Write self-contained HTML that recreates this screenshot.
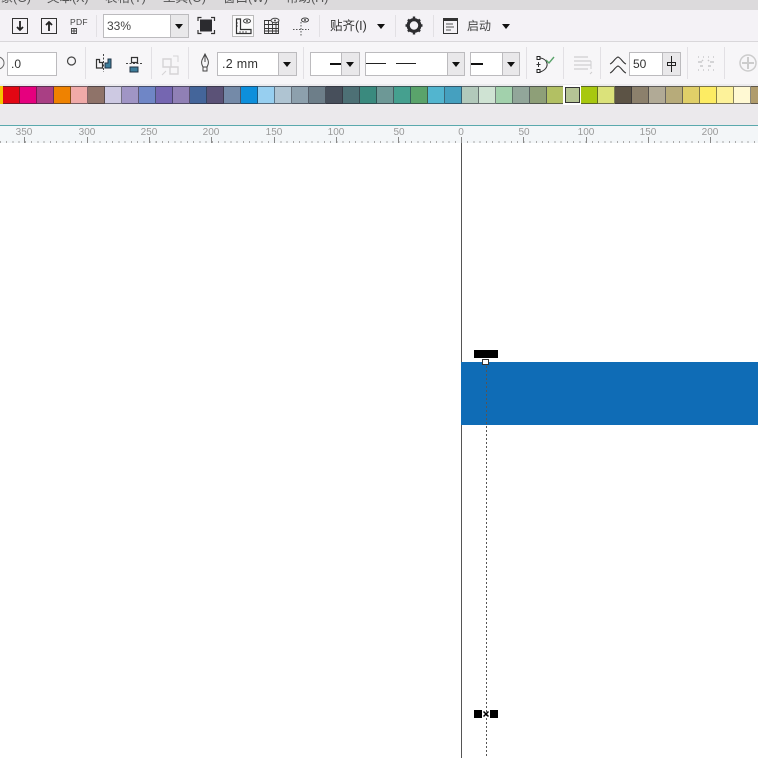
<!DOCTYPE html>
<html><head><meta charset="utf-8">
<style>
html,body{margin:0;padding:0;background:#fff}
#p{position:relative;width:758px;height:758px;overflow:hidden;background:#fff;font-family:"Liberation Sans","Noto Sans CJK SC",sans-serif;color:#333}
#p div,#p span,#p svg{position:absolute;display:block}
.m{font-size:12.500px;line-height:18px;top:-11px;color:#555;white-space:nowrap}
.sep{width:1px;background:#e2e0e4}
.box{background:#fff;border:1px solid #bcbbbe;box-sizing:border-box;font-size:12px;color:#333}
.dd{background:#e9e8ea;border:1px solid #bcbbbe;box-sizing:border-box}
.dd:after,.ar{content:"";position:absolute;width:0;height:0;border-left:4.500px solid transparent;border-right:4.500px solid transparent;border-top:5px solid #111}
.dd:after{left:50%;top:50%;margin-left:-4.500px;margin-top:-2px}
.s{top:86px;height:18px;width:17px;box-sizing:border-box;border-right:1px solid rgba(40,40,50,.55);border-top:1px solid rgba(40,40,50,.6);border-bottom:1px solid rgba(40,40,50,.6)}
.l{top:127px;font-size:10px;line-height:11px;color:#999;width:30px;text-align:center;font-family:"Liberation Sans",sans-serif}
.t{top:137px;width:1px;height:6px;background:#888}
</style></head><body><div id="p">
<!-- menu -->
<div style="left:0;top:0;width:758px;height:10px;background:#dcdadc;overflow:hidden">
<span class="m" style="left:-12px">对象(G)</span><span class="m" style="left:47px">文本(X)</span><span class="m" style="left:105px">表格(T)</span><span class="m" style="left:163px">工具(O)</span><span class="m" style="left:223px">窗口(W)</span><span class="m" style="left:286px">帮助(H)</span>
</div>
<!-- toolbar 1 -->
<div style="left:0;top:10px;width:758px;height:31px;background:#f4f2f6"></div>
<div style="left:0;top:41px;width:758px;height:1px;background:#d9d7da"></div>
<!-- toolbar 2 -->
<div style="left:0;top:42px;width:758px;height:42px;background:#f7f6f8"></div>
<div style="left:0;top:84px;width:758px;height:2px;background:#ecebee"></div>
<div style="left:0;top:104px;width:758px;height:21px;background:#ebe9ec"></div>
<div style="left:0;top:125px;width:758px;height:1px;background:#5aa9ad"></div>
<!-- ruler -->
<div style="left:0;top:126px;width:758px;height:17px;background:#f3f6f8"></div>
<div style="left:0;top:141px;width:758px;height:2px;background:repeating-linear-gradient(90deg,#aaa 0 1px,transparent 1px 6.230px)"></div>

<!-- toolbar 1 icons -->
<svg style="left:0;top:10px" width="330" height="32" viewBox="0 0 330 32" fill="none">
<path d="M12.500 8.500h15v15h-15z" stroke="#333"/><path d="M20 11v9M17 17l3 3 3-3" stroke="#222" stroke-width="1.800"/>
<path d="M41.500 8.500h15v15h-15z" stroke="#333"/><path d="M49 21v-9M46 15l3-3 3 3" stroke="#222" stroke-width="1.800"/>
<path d="M71.500 18.500h5v5h-5zM74 18v6M71 21h6" stroke="#444" stroke-width=".9"/>
<path d="M198 11v-3.500h3.500M211 7.500h3.500V11M214.500 20v3.500H211M201.500 23.500H198V20" stroke="#333" stroke-width="1.200"/>
<rect x="200" y="9.500" width="12" height="12" fill="#2b2b2f"/>
<path d="M232.500 5.500h21v21h-21z" fill="#fcfbfc" stroke="#bbb"/>
<path d="M236.500 9v14.500h14.500v-4h-10.500V9z" stroke="#333" stroke-width="1.200"/><path d="M240 23v-2M243 23v-2M246 23v-2M236 13h2M236 16h2" stroke="#333" stroke-width=".8"/>
<ellipse cx="247" cy="11" rx="3.500" ry="2" stroke="#444"/><circle cx="247" cy="11" r="1" fill="#444"/>
<path d="M264.500 10.500h14v13h-14zM264.500 14.500h14M264.500 18.500h14M264.500 21h14M268.500 10v14M272.500 10v14M276 10v14" stroke="#333" stroke-width=".9"/>
<ellipse cx="275" cy="10.500" rx="4" ry="2.200" fill="#f4f2f6" stroke="#444"/><circle cx="275" cy="10.500" r="1" fill="#444"/>
<path d="M293 19.500h16M301 12v15" stroke="#555" stroke-dasharray="1.500 1.500"/>
<ellipse cx="305" cy="10" rx="3.500" ry="2" stroke="#444"/><circle cx="305" cy="10" r="1" fill="#444"/>
</svg>
<span style="left:70px;top:18px;font-size:8.500px;line-height:9px;color:#444;letter-spacing:.3px">PDF</span>
<div class="sep" style="left:96px;top:15px;height:22px"></div>
<div class="box" style="left:103px;top:14px;width:68px;height:24px;line-height:22px;padding-left:3px;font-size:12px;color:#444">33%</div>
<div class="dd" style="left:170px;top:14px;width:19px;height:24px"></div>
<div class="sep" style="left:319px;top:15px;height:22px"></div>
<span style="left:330px;top:17px;font-size:12.500px;line-height:18px;color:#333;white-space:nowrap">贴齐(I)</span>
<span class="ar" style="left:377px;top:24px"></span>
<div class="sep" style="left:395px;top:15px;height:22px"></div>
<svg style="left:404px;top:15px" width="20" height="21" viewBox="0 0 20 21" fill="none"><circle cx="10" cy="10.500" r="5.800" stroke="#2d2d30" stroke-width="3.200"/><path d="M10 1.500v3M10 16.500v3M1.500 10.500h3M15.500 10.500h3M4 4.500l2 2M14 14.500l2 2M16 4.500l-2 2M6 14.500l-2 2" stroke="#2d2d30" stroke-width="2.400"/></svg>
<div class="sep" style="left:433px;top:15px;height:22px"></div>
<svg style="left:442px;top:16px" width="18" height="19" viewBox="0 0 18 19" fill="none"><path d="M1.500 2.500h14v15h-14z" stroke="#333"/><path d="M1 3h15v2H1z" fill="#333"/><path d="M4 8h7M4 11h8M4 14h5" stroke="#555"/></svg>
<span style="left:467px;top:17px;font-size:12px;line-height:18px;color:#444">启动</span>
<span class="ar" style="left:502px;top:24px"></span>

<!-- toolbar 2 -->
<svg style="left:0;top:42px" width="758" height="42" viewBox="0 0 758 42" fill="none">
<circle cx="-2" cy="21" r="6" stroke="#666"/>
<circle cx="71.500" cy="19" r="4" stroke="#444" stroke-width="1.200"/>
<path d="M96.500 17.500h3v3h3v5.500h-6z" stroke="#333" stroke-width="1.200"/>
<path d="M105 26v-5h3v-4h3v9z" fill="#3d7d9b" stroke="#234"/>
<path d="M103.500 12v18" stroke="#444" stroke-dasharray="2 1.500"/>
<path d="M131.500 15.500h6v5h-6z" stroke="#333" stroke-width="1.200"/>
<rect x="130" y="25" width="8" height="5" fill="#3d7d9b" stroke="#234"/>
<path d="M126 21.500h16" stroke="#444" stroke-dasharray="2 1.500"/>
<path d="M163 17h8v8h-8zM170 25h8v7h-8z" stroke="#d5d4d6" stroke-width="1.400"/><path d="M173 14h5v6M162 33l4-4" stroke="#d5d4d6"/>
<path d="M205 12l3 6c1 3 0 5-1 7h-4c-1-2-2-4-1-7zM205 12v8M203 25h4v4h-4z" stroke="#444"/>
<path d="M537 14.500h3v3h-3zM537 27.500h3v3h-3z" stroke="#222" fill="#fff"/><path d="M540 16c9 1 10 11 0 14M538.500 20v5M536.500 22.500h4" stroke="#333"/>
<path d="M546 18l3 3 5-6" stroke="#5aa36b" stroke-width="1.400"/>
<path d="M574 15h14M574 19h17M574 23h17M574 27h14" stroke="#cfced0" stroke-width="1.200"/><path d="M591 19v8M590 32l2-2" stroke="#cfced0"/>
<path d="M610 22c3-1 5-6 8-7 3 1 5 6 8 7M610 31c3-1 5-6 8-7 3 1 5 6 8 7" stroke="#333" stroke-width="1.100"/>
<path d="M698 15h1M703 15h1M708 15h1M713 15h1M698 20h4M710 20h4M700 24h3M708 24h3M698 28h1M703 28h1M708 28h1M713 28h1M702 18l1 1M709 18l-1 1" stroke="#c9c8ca" stroke-width="1.500"/>
<circle cx="748" cy="21" r="8" stroke="#ccc" stroke-width="1.500"/><path d="M748 15v12M742 21h12" stroke="#ccc" stroke-width="2"/>
</svg>
<div class="box" style="left:7px;top:52px;width:50px;height:24px;line-height:22px;padding-left:3px">.0</div>
<div class="sep" style="left:85px;top:47px;height:32px"></div>
<div class="sep" style="left:151px;top:47px;height:32px"></div>
<div class="sep" style="left:188px;top:47px;height:32px"></div>
<div class="box" style="left:217px;top:52px;width:62px;height:24px;line-height:22px;padding-left:4px;font-size:12.500px;letter-spacing:.3px">.2 mm</div>
<div class="dd" style="left:278px;top:52px;width:19px;height:24px"></div>
<div class="sep" style="left:303px;top:47px;height:32px"></div>
<div class="box" style="left:310px;top:52px;width:32px;height:24px"></div>
<div style="left:330px;top:63px;width:12px;height:2px;background:#111"></div>
<div class="dd" style="left:341px;top:52px;width:19px;height:24px"></div>
<div class="box" style="left:365px;top:52px;width:83px;height:24px"></div>
<div style="left:366px;top:63px;width:20px;height:1px;background:#222"></div>
<div style="left:396px;top:63px;width:20px;height:1px;background:#222"></div>
<div class="dd" style="left:447px;top:52px;width:18px;height:24px"></div>
<div class="box" style="left:470px;top:52px;width:33px;height:24px"></div>
<div style="left:471px;top:63px;width:12px;height:2px;background:#111"></div>
<div class="dd" style="left:502px;top:52px;width:18px;height:24px"></div>
<div class="sep" style="left:526px;top:47px;height:32px"></div>
<div class="sep" style="left:563px;top:47px;height:32px"></div>
<div class="sep" style="left:600px;top:47px;height:32px"></div>
<div class="box" style="left:629px;top:52px;width:34px;height:24px;line-height:22px;padding-left:3px;font-size:12px">50</div>
<div style="left:662px;top:52px;width:19px;height:24px;background:#e9e8ea;border:1px solid #bcbbbe;box-sizing:border-box"></div>
<svg style="left:663px;top:53px" width="17" height="22" viewBox="0 0 17 22" fill="none"><path d="M4.500 9.500h8v3h-8zM8.500 3v16" stroke="#222"/></svg>
<div class="sep" style="left:687px;top:47px;height:32px"></div>
<div class="sep" style="left:724px;top:47px;height:32px"></div>

<!-- palette -->
<div style="left:0;top:86px;width:3px;height:18px;background:#f5c400"></div>
<div class="s" style="left:2.700px;background:#e30613"></div>
<div class="s" style="left:19.700px;background:#e6007e"></div>
<div class="s" style="left:36.700px;background:#a93f84"></div>
<div class="s" style="left:53.700px;background:#ef8200"></div>
<div class="s" style="left:70.700px;background:#f0aaa8"></div>
<div class="s" style="left:87.700px;background:#8f7369"></div>
<div class="s" style="left:104.700px;background:#cdc9e2"></div>
<div class="s" style="left:121.700px;background:#a095c5"></div>
<div class="s" style="left:138.700px;background:#6f86c6"></div>
<div class="s" style="left:155.700px;background:#7566b1"></div>
<div class="s" style="left:172.700px;background:#9080b5"></div>
<div class="s" style="left:189.700px;background:#44659a"></div>
<div class="s" style="left:206.700px;background:#5b5277"></div>
<div class="s" style="left:223.700px;background:#748aa8"></div>
<div class="s" style="left:240.700px;background:#0d8fdc"></div>
<div class="s" style="left:257.700px;background:#97cff0"></div>
<div class="s" style="left:274.700px;background:#afc4d2"></div>
<div class="s" style="left:291.700px;background:#8da0ad"></div>
<div class="s" style="left:308.700px;background:#6d7e89"></div>
<div class="s" style="left:325.700px;background:#474f5b"></div>
<div class="s" style="left:342.700px;background:#4d7075"></div>
<div class="s" style="left:359.700px;background:#3a8a7e"></div>
<div class="s" style="left:376.700px;background:#6d9896"></div>
<div class="s" style="left:393.700px;background:#45a08f"></div>
<div class="s" style="left:410.700px;background:#5aa36b"></div>
<div class="s" style="left:427.700px;background:#52b5cf"></div>
<div class="s" style="left:444.700px;background:#45a0bf"></div>
<div class="s" style="left:461.700px;background:#b2c9bb"></div>
<div class="s" style="left:478.700px;background:#cfe3d3"></div>
<div class="s" style="left:495.700px;background:#a2d1ac"></div>
<div class="s" style="left:512.700px;background:#92a69a"></div>
<div class="s" style="left:529.700px;background:#8e9f78"></div>
<div class="s" style="left:546.700px;background:#b2c063"></div>
<div style="left:563px;top:85px;width:18px;height:20px;background:#fff"></div>
<div style="left:565px;top:87px;width:15px;height:16px;box-sizing:border-box;background:#b5c495;border:1px solid #333"></div>
<div class="s" style="left:580.700px;background:#a8c80f"></div>
<div class="s" style="left:597.700px;background:#dbe27a"></div>
<div class="s" style="left:614.700px;background:#5c5345"></div>
<div class="s" style="left:631.700px;background:#8c806c"></div>
<div class="s" style="left:648.700px;background:#b1aa96"></div>
<div class="s" style="left:665.700px;background:#b7ab7a"></div>
<div class="s" style="left:682.700px;background:#e0cf68"></div>
<div class="s" style="left:699.700px;background:#fdec63"></div>
<div class="s" style="left:716.700px;background:#fdf29a"></div>
<div class="s" style="left:733.700px;background:#fff9d3"></div>
<div class="s" style="left:750.700px;background:#b09c6c"></div>

<!-- ruler labels -->
<span class="l" style="left:9px">350</span><span class="t" style="left:24px"></span>
<span class="l" style="left:72px">300</span><span class="t" style="left:87px"></span>
<span class="l" style="left:134px">250</span><span class="t" style="left:149px"></span>
<span class="l" style="left:196px">200</span><span class="t" style="left:211px"></span>
<span class="l" style="left:259px">150</span><span class="t" style="left:274px"></span>
<span class="l" style="left:321px">100</span><span class="t" style="left:336px"></span>
<span class="l" style="left:384px">50</span><span class="t" style="left:398px"></span>
<span class="l" style="left:446px">0</span><span class="t" style="left:461px"></span>
<span class="l" style="left:509px">50</span><span class="t" style="left:523px"></span>
<span class="l" style="left:571px">100</span><span class="t" style="left:586px"></span>
<span class="l" style="left:633px">150</span><span class="t" style="left:648px"></span>
<span class="l" style="left:695px">200</span><span class="t" style="left:710px"></span>

<!-- canvas -->
<div style="left:461px;top:143px;width:1px;height:615px;background:#555"></div>
<div style="left:461px;top:362px;width:297px;height:63px;background:#0f6cb6"></div>
<div style="left:486px;top:362px;width:1px;height:396px;background:repeating-linear-gradient(180deg,#555 0 2px,transparent 2px 4px)"></div>
<div style="left:474px;top:350px;width:24px;height:8px;background:#000"></div>
<div style="left:482px;top:359px;width:5px;height:4px;border:1px solid #333;background:#fff"></div>
<div style="left:474px;top:710px;width:8px;height:8px;background:#000"></div>
<div style="left:490px;top:710px;width:8px;height:8px;background:#000"></div>
<svg style="left:482px;top:710px" width="8" height="8" viewBox="0 0 8 8"><path d="M1.500 1.500l5 5M6.500 1.500l-5 5" stroke="#000" stroke-width="1.500"/></svg>
</div></body></html>
